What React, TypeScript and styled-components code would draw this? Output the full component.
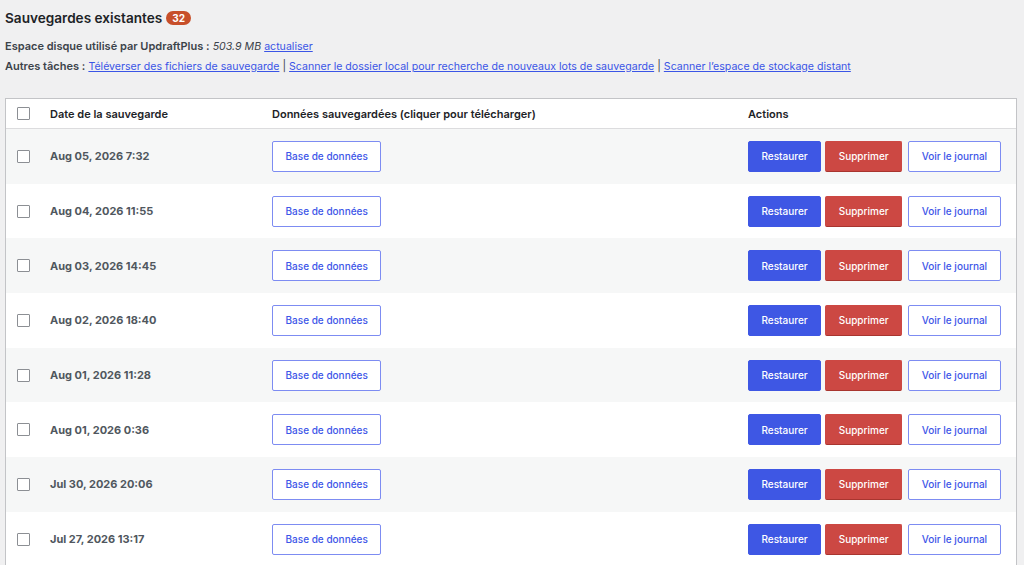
import React from "react";
import styled, { createGlobalStyle } from "styled-components";

const Global = createGlobalStyle`
  html, body { margin: 0; padding: 0; background: #f0f0f1; }
  body { font-family: Inter, "Noto Sans", "Liberation Sans", sans-serif; color: #1d2327; }
`;

const Page = styled.div`
  padding: 8px 8px 0 5px;
  height: 565px;
  overflow: hidden;
  box-sizing: border-box;
`;

const TitleRow = styled.h2`
  display: flex;
  align-items: center;
  gap: 4px;
  margin: 0;
  font-size: 13.6px;
  font-weight: 600;
  color: #1d2327;
  height: 20px;
`;

const Badge = styled.span`
  display: inline-flex;
  align-items: center;
  justify-content: center;
  height: 14px;
  padding: 0 6px;
  border-radius: 8px;
  background: #c74f2a;
  color: #fff;
  font-size: 10px;
  font-weight: 700;
`;

const InfoLine = styled.p<{ $mt?: number }>`
  margin: ${(p) => p.$mt ?? 0}px 0 0;
  height: 20px;
  font-size: 11px;
  line-height: 20px;
  color: #3c434a;
  white-space: nowrap;
`;

const Label = styled.span`
  font-weight: 600;
  color: #3c434a;
`;

const Size = styled.em`
  font-size: 10.6px;
`;

const Link = styled.a`
  font-size: 10.6px;
  color: #3b55e6;
  text-decoration: underline;
  cursor: pointer;
`;

const Sep = styled.span`
  color: #3c434a;
  margin: 0 3px;
`;

const Table = styled.div`
  margin-top: 22px;
  width: 1012px;
  border: 1px solid #c3c4c7;
  background: #fff;
  box-sizing: border-box;
`;

const Row = styled.div<{ $striped?: boolean; $header?: boolean }>`
  display: grid;
  grid-template-columns: 33px 222px 476px 1fr;
  align-items: center;
  padding-left: 11px;
  height: ${(p) => (p.$header ? "29px" : "54.7px")};
  background: ${(p) => (p.$striped ? "#f6f7f7" : "#fff")};
  border-bottom: ${(p) => (p.$header ? "1px solid #dcdcde" : "none")};
`;

const Check = styled.span`
  display: block;
  width: 11px;
  height: 11px;
  border: 1px solid #8c8f94;
  border-radius: 1px;
  background: #fff;
`;

const HeadCell = styled.div`
  font-size: 11px;
  font-weight: 600;
  color: #1d2327;
`;

const DateCell = styled.div`
  font-size: 11px;
  font-weight: 700;
  color: #50575e;
`;

const Actions = styled.div`
  display: flex;
  align-items: center;
`;

const Button = styled.button<{ $variant: "outline" | "primary" | "danger"; $ml?: number }>`
  height: 31px;
  padding: 0 12.5px;
  margin-left: ${(p) => p.$ml ?? 0}px;
  font-family: inherit;
  font-size: 10px;
  font-weight: 500;
  border-radius: 2px;
  cursor: pointer;
  box-sizing: border-box;
  white-space: nowrap;
  ${(p) =>
    p.$variant === "outline"
      ? `background: #fff; color: #3d56e8; border: 1px solid #7d8cf2;`
      : p.$variant === "primary"
      ? `background: #3e57e4; color: #fff; border: 1px solid #3e57e4;`
      : `background: #cc4843; color: #fff; border: 1px solid #cc4843; border-bottom-color: #a8352f;`}
`;

const backups = [
  "Aug 05, 2026 7:32",
  "Aug 04, 2026 11:55",
  "Aug 03, 2026 14:45",
  "Aug 02, 2026 18:40",
  "Aug 01, 2026 11:28",
  "Aug 01, 2026 0:36",
  "Jul 30, 2026 20:06",
  "Jul 27, 2026 13:17",
];

export default function App() {
  return (
    <Page>
      <Global />
      <TitleRow>
        Sauvegardes existantes <Badge>32</Badge>
      </TitleRow>
      <InfoLine $mt={8}>
        <Label>Espace disque utilisé par UpdraftPlus :</Label> <Size>503.9 MB</Size>{" "}
        <Link>actualiser</Link>
      </InfoLine>
      <InfoLine>
        <Label>Autres tâches :</Label> <Link>Téléverser des fichiers de sauvegarde</Link>
        <Sep>|</Sep>
        <Link>Scanner le dossier local pour recherche de nouveaux lots de sauvegarde</Link>
        <Sep>|</Sep>
        <Link>Scanner l’espace de stockage distant</Link>
      </InfoLine>
      <Table>
        <Row $header>
          <Check />
          <HeadCell>Date de la sauvegarde</HeadCell>
          <HeadCell>Données sauvegardées (cliquer pour télécharger)</HeadCell>
          <HeadCell>Actions</HeadCell>
        </Row>
        {backups.map((d, i) => (
          <Row key={d} $striped={i % 2 === 0}>
            <Check />
            <DateCell>{d}</DateCell>
            <div>
              <Button $variant="outline">Base de données</Button>
            </div>
            <Actions>
              <Button $variant="primary">Restaurer</Button>
              <Button $variant="danger" $ml={4}>Supprimer</Button>
              <Button $variant="outline" $ml={6}>Voir le journal</Button>
            </Actions>
          </Row>
        ))}
      </Table>
    </Page>
  );
}
